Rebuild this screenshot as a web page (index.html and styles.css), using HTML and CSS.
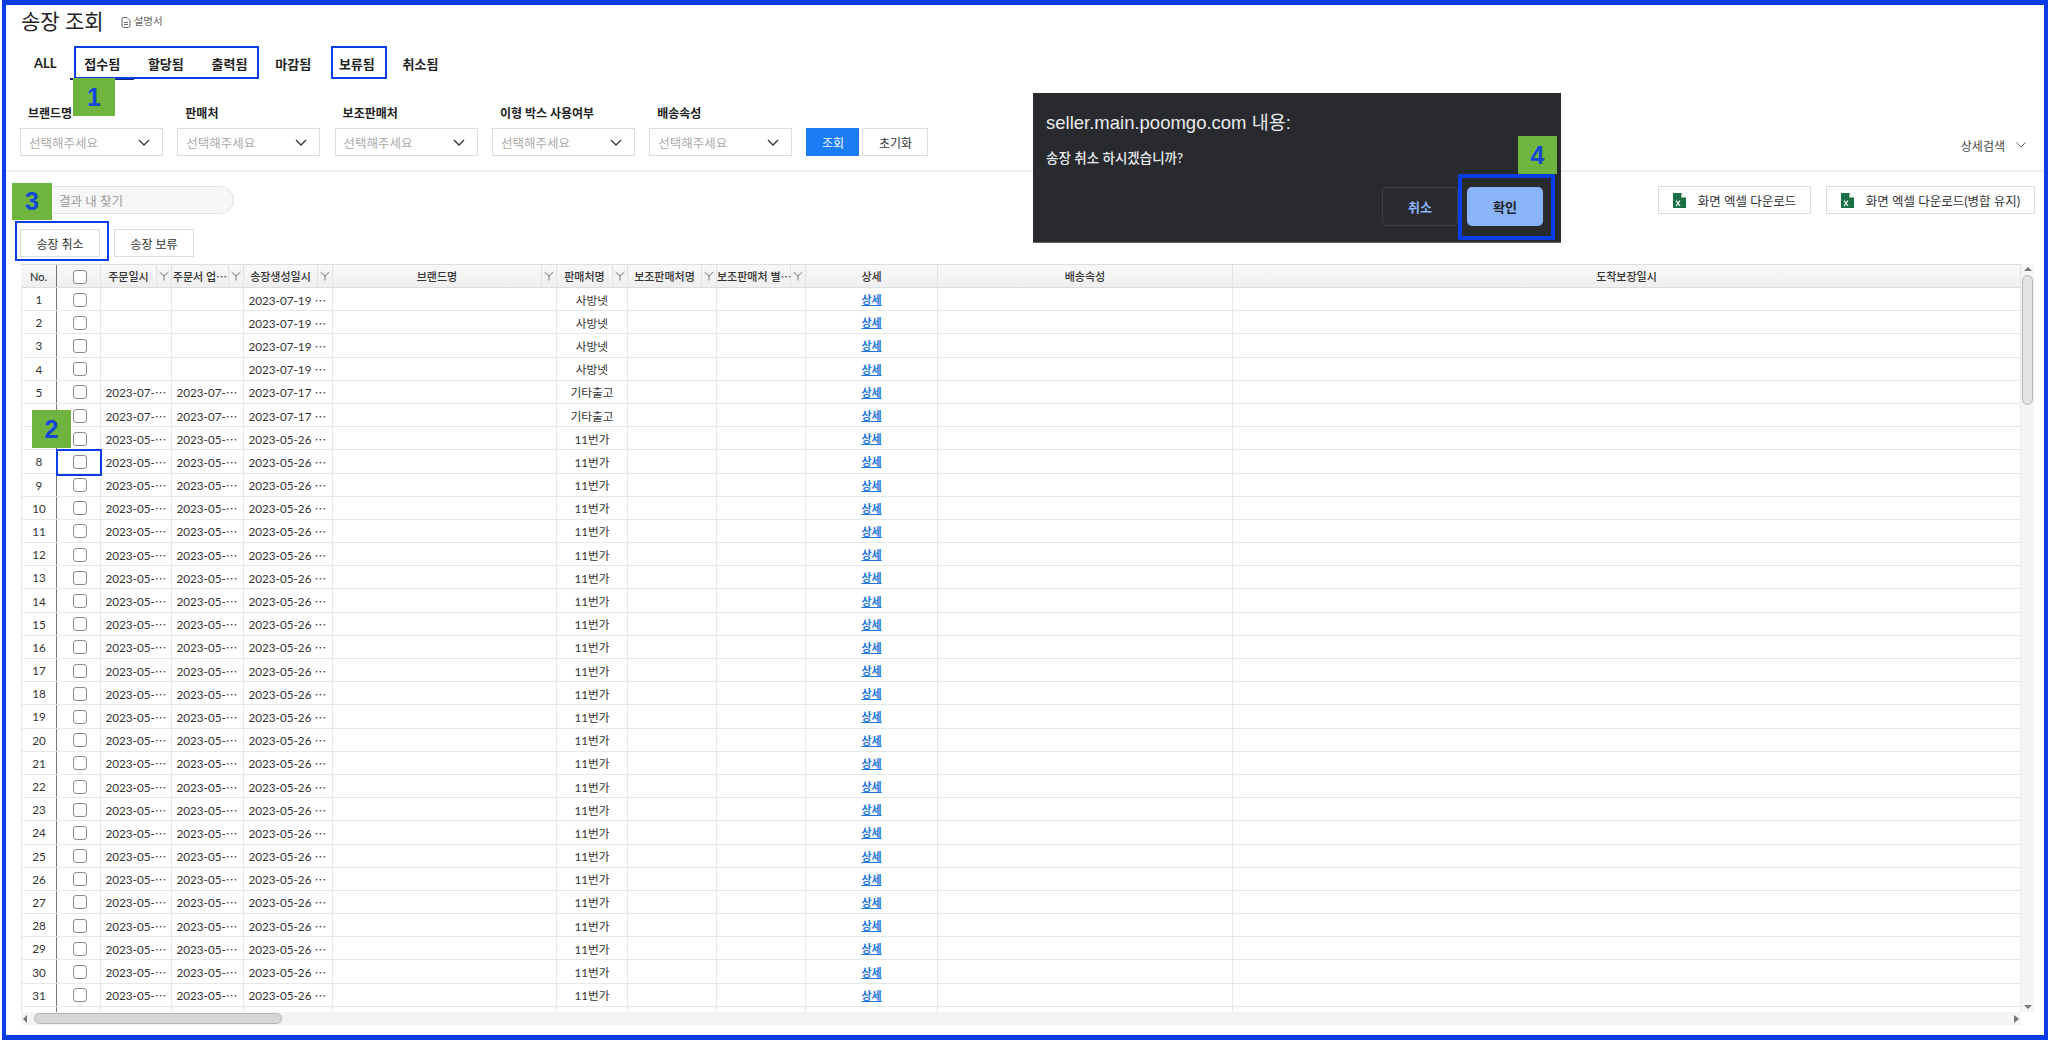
FILE: index.html
```html
<!DOCTYPE html>
<html lang="ko">
<head>
  <meta charset="UTF-8" />
  <title>송장 조회</title>
  <link rel="stylesheet" href="styles.css">
</head>
<body>
  <div class="frame">

    <!-- Title -->
    <div class="title-row">
      <h1>송장 조회</h1>
      <svg class="doc-icon" width="10" height="11" viewBox="0 0 10 11" fill="none" stroke="#666" stroke-width="1">
        <path d="M1 1.500a1 1 0 0 1 1-1h4l3 3v5.500a1.500 1.500 0 0 1-1.500 1.500h-5a1.500 1.500 0 0 1-1.500-1.500z"/>
        <path d="M3 5.500h4M3 7.500h4"/>
      </svg>
      <span class="doc-link">설명서</span>
    </div>

    <!-- Tabs -->
    <div class="tabs">
      <div class="tab">ALL</div>
      <div class="tab active">접수됨</div>
      <div class="tab">할당됨</div>
      <div class="tab">출력됨</div>
      <div class="tab">마감됨</div>
      <div class="tab">보류됨</div>
      <div class="tab">취소됨</div>
    </div>

    <!-- Filters -->
    <div class="filters">
      <div class="filter">
        <label>브랜드명</label>
        <div class="select">선택해주세요<svg class="chevron" width="12" height="7" viewBox="0 0 12 7"><path d="M1 1l5 5 5-5" fill="none" stroke="#333" stroke-width="1.300"/></svg></div>
      </div>
      <div class="filter">
        <label>판매처</label>
        <div class="select">선택해주세요<svg class="chevron" width="12" height="7" viewBox="0 0 12 7"><path d="M1 1l5 5 5-5" fill="none" stroke="#333" stroke-width="1.300"/></svg></div>
      </div>
      <div class="filter">
        <label>보조판매처</label>
        <div class="select">선택해주세요<svg class="chevron" width="12" height="7" viewBox="0 0 12 7"><path d="M1 1l5 5 5-5" fill="none" stroke="#333" stroke-width="1.300"/></svg></div>
      </div>
      <div class="filter">
        <label>이형 박스 사용여부</label>
        <div class="select">선택해주세요<svg class="chevron" width="12" height="7" viewBox="0 0 12 7"><path d="M1 1l5 5 5-5" fill="none" stroke="#333" stroke-width="1.300"/></svg></div>
      </div>
      <div class="filter">
        <label>배송속성</label>
        <div class="select">선택해주세요<svg class="chevron" width="12" height="7" viewBox="0 0 12 7"><path d="M1 1l5 5 5-5" fill="none" stroke="#333" stroke-width="1.300"/></svg></div>
      </div>
      <div class="filter-buttons">
        <button class="btn-search">조회</button>
        <button class="btn-reset">초기화</button>
      </div>
      <div class="more-search">상세검색
        <svg width="10" height="6" viewBox="0 0 10 6"><path d="M.5.5l4.500 4.500 4.500-4.500" fill="none" stroke="#666" stroke-width="1"/></svg>
      </div>
    </div>

    <!-- Search + downloads -->
    <div class="toolbar">
      <div class="result-search">결과 내 찾기</div>
      <div class="downloads">
        <button class="btn-excel btn-excel-short">
          <svg width="13" height="15" viewBox="0 0 13 15"><path d="M0 0h8.500l4.500 4.500v10.500h-13z" fill="#1d7044"/><path d="M8.500 0v4.500h4.500z" fill="#fff"/><path d="M3 7.500l4 5.500M7 7.500l-4 5.500" stroke="#fff" stroke-width="1.200"/></svg>
          화면 엑셀 다운로드
        </button>
        <button class="btn-excel btn-excel-long">
          <svg width="13" height="15" viewBox="0 0 13 15"><path d="M0 0h8.500l4.500 4.500v10.500h-13z" fill="#1d7044"/><path d="M8.500 0v4.500h4.500z" fill="#fff"/><path d="M3 7.500l4 5.500M7 7.500l-4 5.500" stroke="#fff" stroke-width="1.200"/></svg>
          화면 엑셀 다운로드(병합 유지)
        </button>
      </div>
    </div>

    <div class="actions">
      <button class="btn-action">송장 취소</button>
      <button class="btn-action">송장 보류</button>
    </div>

    <!-- Grid -->
    <div class="grid-wrap">
      <div class="grid-main">
        <div class="grid-head" id="grid-head"></div>
        <div class="grid-body" id="grid-body"></div>
        <div class="hscroll">
          <span class="arrow-left"></span>
          <span class="hthumb"></span>
          <span class="arrow-right"></span>
        </div>
      </div>
      <div class="vscroll">
        <span class="arrow-up"></span>
        <span class="vthumb"></span>
        <span class="arrow-down"></span>
      </div>
    </div>

    <!-- Browser confirm dialog -->
    <div class="dialog">
      <div class="dialog-title">seller.main.poomgo.com 내용:</div>
      <div class="dialog-text">송장 취소 하시겠습니까?</div>
      <div class="dialog-buttons">
        <button class="dialog-cancel">취소</button>
        <button class="dialog-ok">확인</button>
      </div>
    </div>

    <!-- Guide marks -->
    <div class="mark mark-tabs"></div>
    <div class="mark mark-hold"></div>
    <div class="mark mark-check"></div>
    <div class="mark mark-cancel"></div>
    <div class="mark mark-ok"></div>
    <div class="badge badge-1">1</div>
    <div class="badge badge-2">2</div>
    <div class="badge badge-3">3</div>
    <div class="badge badge-4">4</div>
  </div>

  <script>
    const filterIcon = `<span class="filter-cell"><svg width="10" height="10" viewBox="0 0 10 10"><path d="M.5 1l4.500 4v4.500M9.500 1l-4.500 4" fill="none" stroke="#777" stroke-width="1"/></svg></span>`;

    // Header
    const headers = [
      ["No.", false], ["", false], ["주문일시", true], ["주문서 업⋯", true], ["송장생성일시", true],
      ["브랜드명", true], ["판매처명", true], ["보조판매처명", true], ["보조판매처 별⋯", true],
      ["상세", false], ["배송속성", false], ["도착보장일시", false]
    ];
    document.getElementById("grid-head").innerHTML = headers.map((h, i) => {
      const inner = i === 1 ? `<input type="checkbox" />` : `<span class="head-label">${h[0]}</span>`;
      return `<div class="head-cell">${inner}${h[1] ? filterIcon : ""}</div>`;
    }).join("");

    // Rows
    function rowData(n) {
      if (n <= 4) return ["", "", "2023-07-19 ⋯", "사방넷"];
      if (n <= 6) return ["2023-07-⋯", "2023-07-⋯", "2023-07-17 ⋯", "기타출고"];
      return ["2023-05-⋯", "2023-05-⋯", "2023-05-26 ⋯", "11번가"];
    }
    let rows = "";
    for (let n = 1; n <= 31; n++) {
      const d = rowData(n);
      rows += `
        <div class="grid-row">
          <div class="cell center">${n}</div>
          <div class="cell center"><input type="checkbox" /></div>
          <div class="cell">${d[0]}</div>
          <div class="cell">${d[1]}</div>
          <div class="cell">${d[2]}</div>
          <div class="cell"></div>
          <div class="cell center">${d[3]}</div>
          <div class="cell"></div>
          <div class="cell"></div>
          <div class="cell center"><a href="#">상세</a></div>
          <div class="cell"></div>
          <div class="cell"></div>
        </div>`;
    }
    // the row cut off by the scrollbar shows only its column lines
    rows += `<div class="grid-row">${'<div class="cell"></div>'.repeat(12)}</div>`;
    document.getElementById("grid-body").innerHTML = rows;
  </script>
</body>
</html>
```

FILE: styles.css
```css
:root {
  --mark-blue: #0b3de6;
  --badge-green: #6fb43f;
  --line: #e6e9ec;
  --columns: 36px 44px 71px 72px 89px 224px 71px 89px 89px 132px 295px 788px;
}

* {
  box-sizing: border-box;
}

body {
  margin: 0;
  background: white;
  color: #222;
  font-family: Lato, "Noto Sans CJK KR", sans-serif;
  font-size: 12px;
}

button {
  font-family: inherit;
  cursor: pointer;
}

.frame {
  position: relative;
  width: 2046px;
  height: 1040px;
  margin-left: 2px;
  border: 4px solid var(--mark-blue);
  border-top-width: 5px;
  border-bottom-width: 5px;
  overflow: hidden;
}

/* Title */
.title-row {
  display: flex;
  align-items: center;
  height: 30px;
  padding-left: 15px;
}

.title-row h1 {
  margin: 0;
  font-size: 21px;
  font-weight: 400;
  color: #222;
}

.doc-icon {
  margin: 4px 3px 0 17px;
}

.doc-link {
  margin-top: 1px;
  font-size: 10.5px;
  color: #666;
}

/* Tabs */
.tabs {
  display: flex;
  height: 34px;
  margin-top: 11px;
  padding-left: 14px;
}

.tab {
  display: flex;
  align-items: center;
  padding: 2px 13.900px 0;
  border-bottom: 2px solid transparent;
  font-size: 13px;
  font-weight: 700;
}

.tab.active {
  border-bottom-color: #14297a;
}

/* Filters */
.filters {
  display: flex;
  align-items: flex-end;
  margin-top: 26px;
  padding: 0 18px 14px 14px;
  border-bottom: 2px solid #eee;
}

.filter {
  width: 143px;
  margin-right: 14.300px;
}

.filter label {
  display: block;
  height: 16px;
  margin-bottom: 6px;
  padding-left: 8px;
  font-size: 12px;
  font-weight: 700;
  line-height: 16px;
  white-space: nowrap;
}

.select {
  display: flex;
  align-items: center;
  justify-content: space-between;
  height: 28px;
  padding: 0 12px 0 8px;
  border: 1px solid #ddd;
  font-size: 12.500px;
  color: #aaa;
}

.filter-buttons {
  display: flex;
  gap: 3px;
}

.filter-buttons button {
  height: 28px;
  font-size: 12px;
}

.btn-search {
  width: 53px;
  border: 1px solid #1b7cf5;
  background: #1b7cf5;
  color: white;
}

.btn-reset {
  width: 66px;
  border: 1px solid #ddd;
  background: white;
  color: #333;
}

.more-search {
  display: flex;
  align-items: center;
  gap: 11px;
  margin-left: auto;
  margin-bottom: 3px;
  height: 16px;
  font-size: 12px;
  color: #444;
}

/* Search + downloads */
.toolbar {
  display: flex;
  justify-content: space-between;
  margin-top: 14px;
  padding: 0 9px 0 14px;
}

.result-search {
  display: flex;
  align-items: center;
  width: 214px;
  height: 28px;
  padding-left: 38px;
  border: 1px solid #e2e2e2;
  border-radius: 14px;
  background: #f6f6f6;
  font-size: 12.500px;
  color: #999;
}

.downloads {
  display: flex;
  gap: 15px;
}

.btn-excel {
  display: flex;
  align-items: center;
  justify-content: center;
  gap: 12px;
  height: 28px;
  padding: 0;
  border: 1px solid #ddd;
  background: white;
  font-size: 12.500px;
  color: #333;
}

.btn-excel-short {
  width: 153px;
}

.btn-excel-long {
  width: 209px;
}

.actions {
  display: flex;
  gap: 14px;
  margin-top: 15px;
  padding-left: 14px;
}

.btn-action {
  width: 80px;
  height: 28px;
  border: 1px solid #ddd;
  background: white;
  font-size: 12px;
  color: #333;
}

/* Grid */
.grid-wrap {
  display: flex;
  align-items: flex-start;
  margin: 7px 0 0 15px;
}

.grid-main {
  width: 2000px;
}

.grid-head {
  display: grid;
  grid-template-columns: var(--columns);
  height: 24px;
  border-top: 1px solid #ddd;
  border-bottom: 1px solid #ddd;
  background: linear-gradient(to bottom, #f8f8f8, #efefef);
}

.head-cell {
  display: flex;
  align-items: center;
  justify-content: center;
  min-width: 0;
  border-right: 1px solid #e2e2e2;
  font-size: 11px;
  font-weight: 500;
  color: #333;
}

.head-cell:first-child {
  border-right: 1px solid #777;
}

.head-label {
  flex: 1;
  min-width: 0;
  text-align: center;
  white-space: nowrap;
  overflow: hidden;
}

.filter-cell {
  display: flex;
  align-items: center;
  justify-content: center;
  flex: 0 0 15px;
  height: 100%;
  border-left: 1px solid #e2e2e2;
}

.grid-body {
  height: 724px;
  overflow: hidden;
}

.grid-row {
  display: grid;
  grid-template-columns: var(--columns);
  height: 23.200px;
  border-bottom: 1px solid var(--line);
}

.cell {
  display: flex;
  align-items: center;
  min-width: 0;
  padding-left: 4.500px;
  border-right: 1px solid var(--line);
  font-size: 11.700px;
  color: #333;
  white-space: nowrap;
  overflow: hidden;
}

.cell:first-child {
  border-right: 1px solid #777;
  border-left: 1px solid var(--line);
}

.cell.center {
  justify-content: center;
  padding-left: 0;
}

.cell a {
  font-size: 11px;
  font-weight: 700;
  color: #1f78e0;
}

input[type="checkbox"] {
  appearance: none;
  width: 14px;
  height: 14px;
  margin: 1px 0 0 2px;
  border: 1px solid #8c8c8c;
  border-radius: 3px;
  background: white;
}

/* Scrollbars */
.hscroll {
  display: flex;
  align-items: center;
  height: 13px;
  background: #f3f3f3;
}

.hthumb {
  width: 248px;
  height: 11px;
  margin-left: 7px;
  border: 1px solid #b5b5b5;
  border-radius: 6px;
  background: #d6d6d6;
}

.arrow-left {
  margin-left: 2px;
  border: 4px solid transparent;
  border-left-width: 0;
  border-right: 4px solid #777;
}

.arrow-right {
  margin-left: auto;
  margin-right: 2px;
  border: 4px solid transparent;
  border-right-width: 0;
  border-left: 5px solid #777;
}

.vscroll {
  display: flex;
  flex-direction: column;
  align-items: center;
  width: 13px;
  height: 748px;
  background: #f5f5f5;
}

.arrow-up {
  margin-top: 3px;
  border: 4px solid transparent;
  border-top-width: 0;
  border-bottom: 4px solid #777;
}

.vthumb {
  width: 11px;
  height: 130px;
  margin-top: 4px;
  border: 1px solid #b5b5b5;
  border-radius: 6px;
  background: #e4e4e4;
}

.arrow-down {
  margin-top: auto;
  margin-bottom: 3px;
  border: 4px solid transparent;
  border-bottom-width: 0;
  border-top: 4px solid #777;
}

/* Browser confirm dialog */
.dialog {
  position: absolute;
  left: 1027px;
  top: 88px;
  display: flex;
  flex-direction: column;
  width: 528px;
  height: 150px;
  padding: 19px 13px 16px;
  border-bottom: 1px solid #666;
  background: #292a2d;
  color: #e8eaed;
}

.dialog-title {
  font-family: "Liberation Sans", "Noto Sans CJK KR", sans-serif;
  font-size: 18.500px;
  line-height: 22px;
}

.dialog-text {
  margin-top: 14px;
  font-size: 13.500px;
  font-weight: 500;
  line-height: 20px;
}

.dialog-buttons {
  display: flex;
  justify-content: flex-end;
  gap: 9px;
  margin-top: auto;
  padding-right: 5px;
}

.dialog-buttons button {
  width: 76px;
  height: 39px;
  border-radius: 5px;
  font-size: 13px;
  font-weight: 700;
}

.dialog-cancel {
  border: 1px solid #3c4043;
  background: transparent;
  color: #8ab4f8;
}

.dialog-ok {
  border: none;
  background: #8ab4f8;
  color: #202124;
}

/* Guide marks */
.mark {
  position: absolute;
  border: 2.500px solid var(--mark-blue);
}

.mark-tabs {
  left: 68px;
  top: 41px;
  width: 185px;
  height: 33px;
}

.mark-hold {
  left: 325px;
  top: 41px;
  width: 56px;
  height: 33px;
}

.mark-check {
  left: 50px;
  top: 444px;
  width: 46px;
  height: 27px;
}

.mark-cancel {
  left: 9px;
  top: 216px;
  width: 94px;
  height: 40px;
}

.mark-ok {
  left: 1452px;
  top: 169px;
  width: 97px;
  height: 66px;
  border-width: 4px;
}

.badge {
  position: absolute;
  display: flex;
  align-items: center;
  justify-content: center;
  background: var(--badge-green);
  font-family: "Liberation Sans", sans-serif;
  font-size: 25px;
  font-weight: 700;
  color: #1447d8;
}

.badge-1 {
  left: 67px;
  top: 73px;
  width: 42px;
  height: 38px;
}

.badge-2 {
  left: 26px;
  top: 405px;
  width: 39px;
  height: 38px;
}

.badge-3 {
  left: 6px;
  top: 178px;
  width: 40px;
  height: 37px;
}

.badge-4 {
  left: 1512px;
  top: 131px;
  width: 39px;
  height: 38px;
}
```
